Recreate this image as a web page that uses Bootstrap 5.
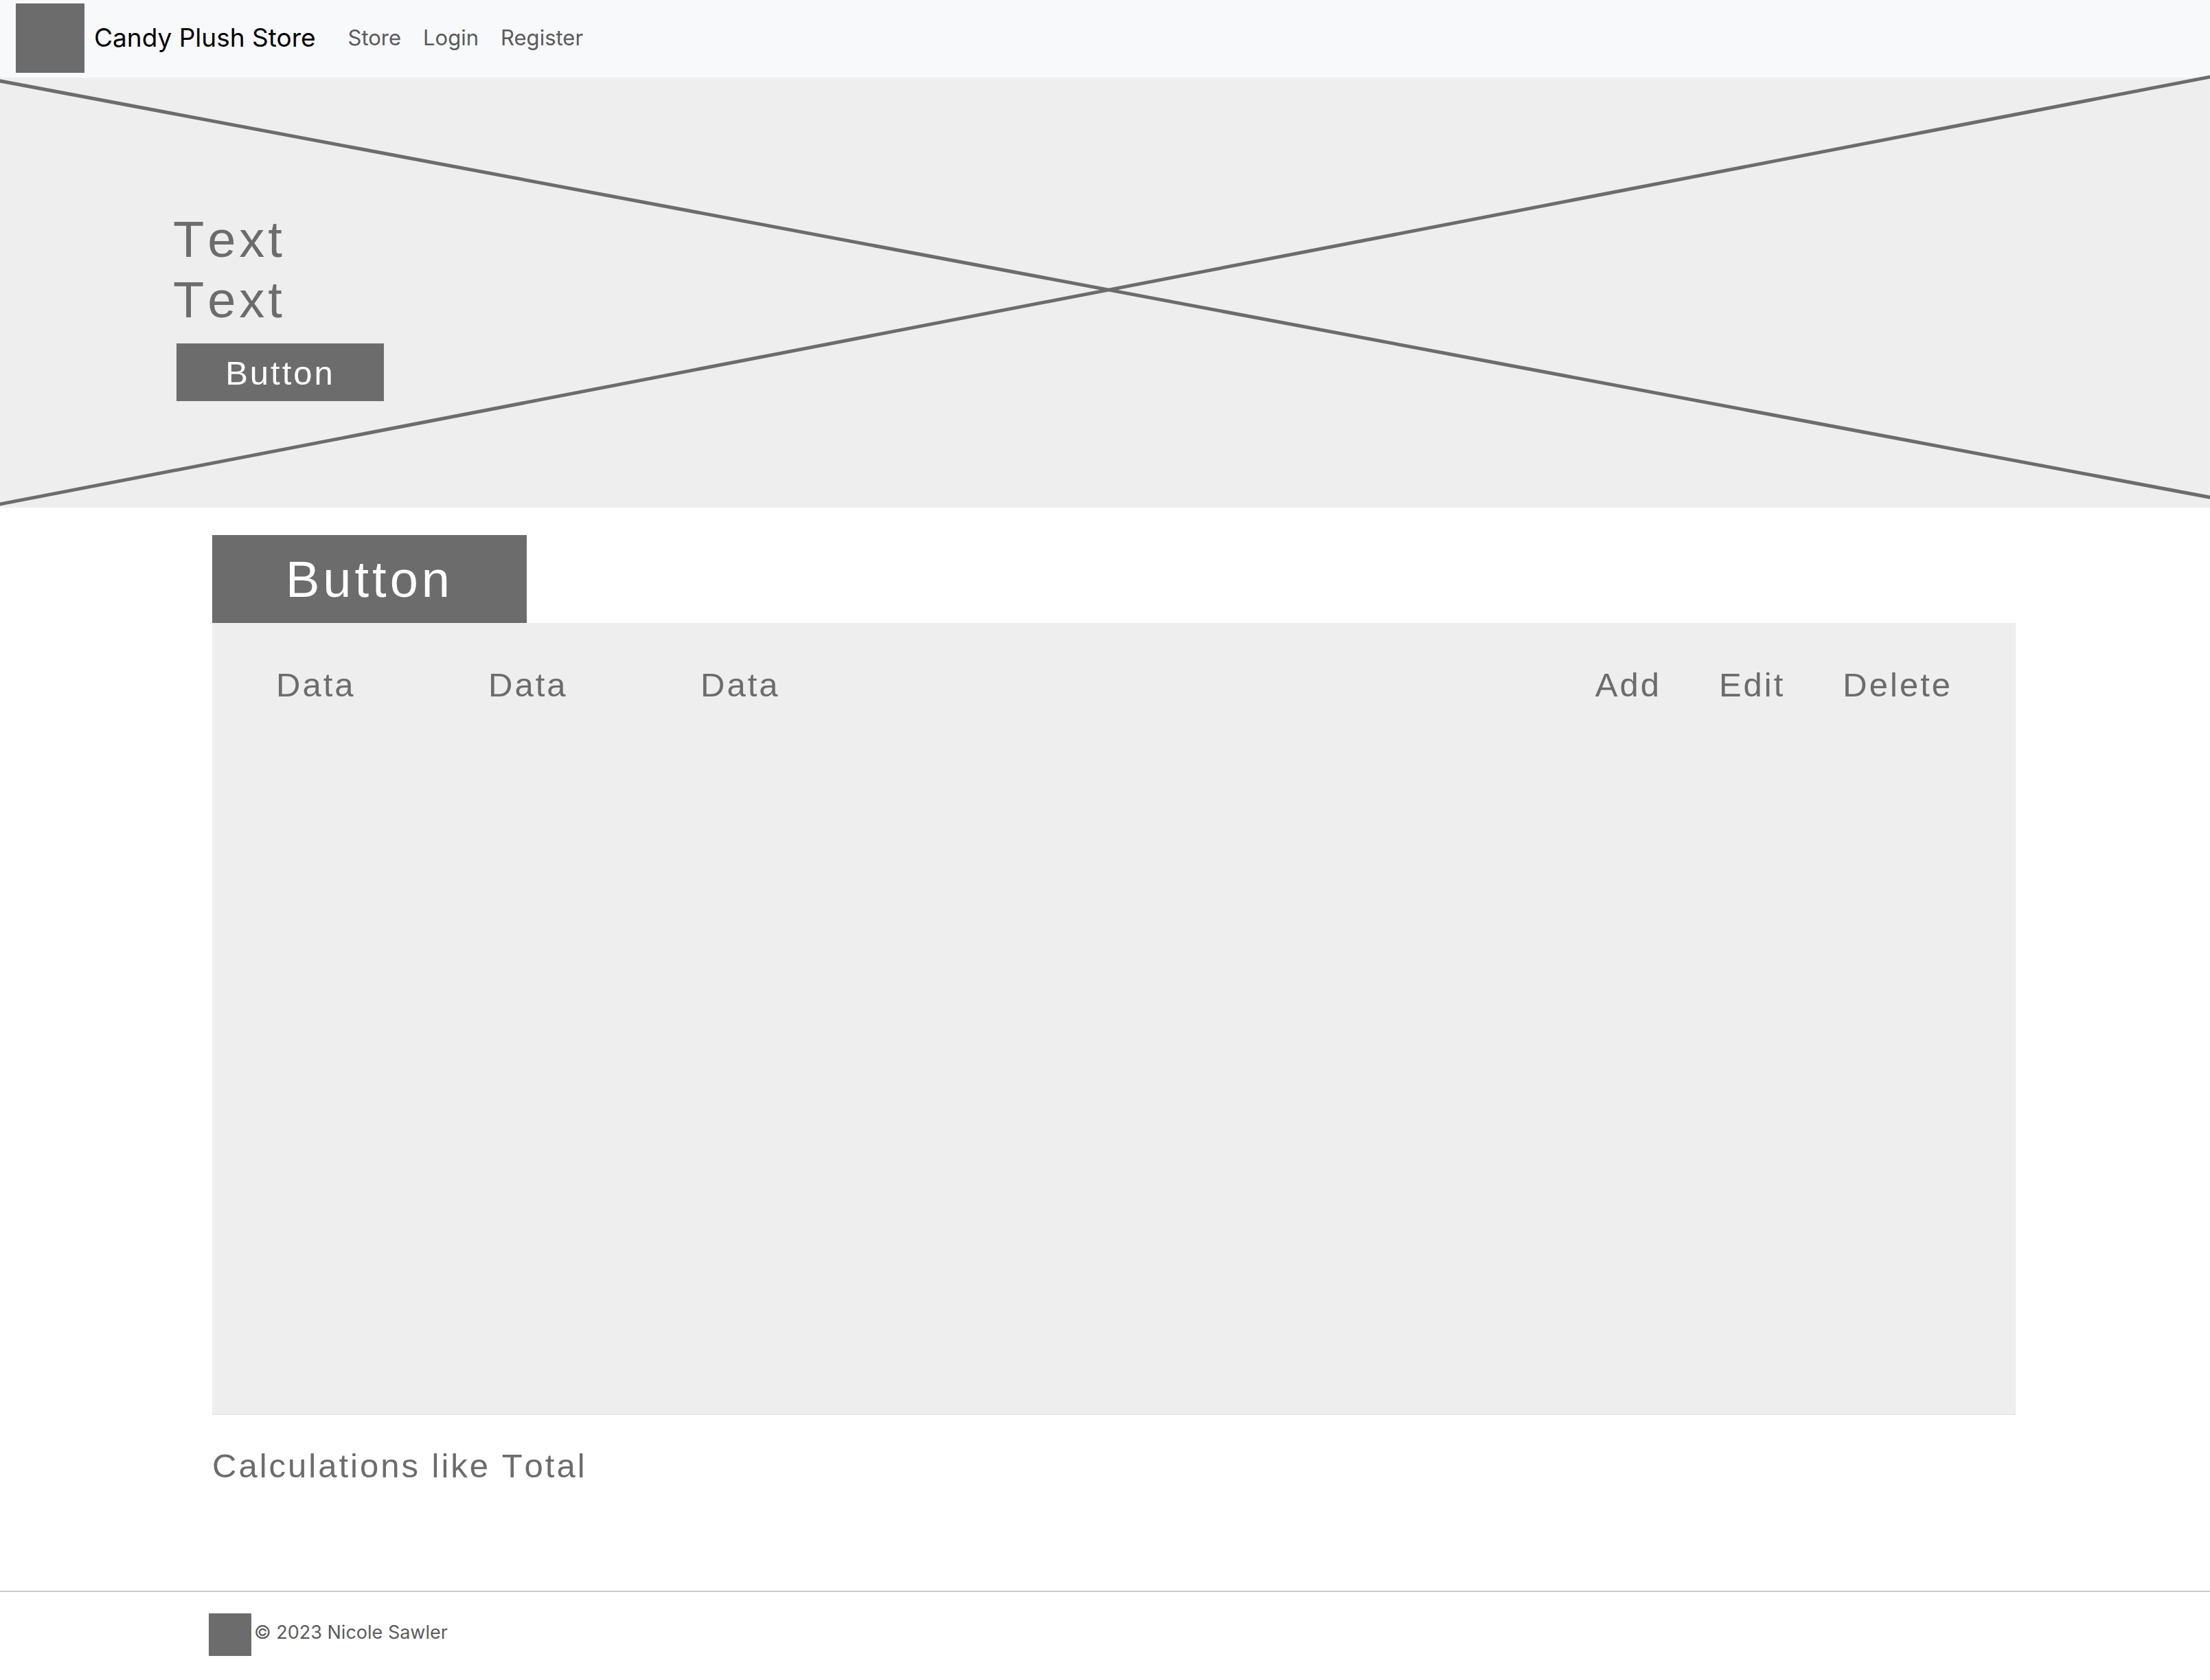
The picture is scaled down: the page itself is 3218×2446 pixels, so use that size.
<!DOCTYPE html>
<html lang="en">
<head>
<meta charset="utf-8">
<meta name="viewport" content="width=device-width, initial-scale=1">
<title>Candy Plush Store</title>
<link href="https://cdn.jsdelivr.net/npm/bootstrap@5.3.0/dist/css/bootstrap.min.css" rel="stylesheet">
<style>
:root { --ink: #6c6c6c; --panel: #eeeeee; }
body { font-family: "Liberation Sans", Arial, sans-serif; color: var(--ink); background: #fff; }
.store-nav { font-family: Inter, sans-serif; background: #f8f9fb; height: 113px; padding: 0 23px 3px; }
.brand-mark { width: 100px; height: 101px; background: var(--ink); }
.store-nav .navbar-brand { font-size: 37px; line-height: 60px; color: #000; gap: 14px; margin-right: 31px; padding: 0; }
.store-nav .navbar-nav .nav-link { font-size: 31px; line-height: 48px; color: #5a5b5c; padding: 0 16px; }
.wire-lg { font-size: 74px; line-height: 88px; letter-spacing: 5px; font-weight: 400; font-kerning: none; }
.wire-md { font-size: 49px; line-height: 56px; letter-spacing: 3px; font-weight: 400; font-kerning: none; }
.hero { background: var(--panel); min-height: 626px; padding: 192px 252px 0; }
.hero-cross { z-index: 0; overflow: visible; pointer-events: none; }
.hero-copy { z-index: 1; }
.wire-btn { background: var(--ink); color: #fff; border: 0; border-radius: 0; padding: 2px 0 0; }
.wire-btn:hover { background: #5c5c5c; color: #fff; }
.hero-btn { width: 302px; height: 84px; margin: 19px 0 0 5px; }
.tab-btn { width: 458px; height: 128px; }
.page-body { padding: 40px 283px 0 309px; }
.data-panel { background: var(--panel); min-height: 1153px; padding: 62px 92px 0 93px; border-bottom: 1px solid #e0e0e0; }
.data-cell { width: 309px; }
.row-actions { gap: 84px; }
.row-action { background: none; border: 0; border-radius: 0; padding: 0; color: var(--ink); }
.total-line { margin: 46px 0 154px; }
.site-footer { font-family: Inter, sans-serif; border-top: 2px solid #c8c8c8; padding: 31px 304px; gap: 4px; }
.footer-mark { width: 62px; height: 62px; background: var(--ink); }
.footer-copy { font-size: 27px; line-height: 56px; color: #5a5b5c; }
</style>
<script src="https://cdn.jsdelivr.net/npm/bootstrap@5.3.0/dist/js/bootstrap.bundle.min.js"></script>
</head>
<body>
<nav class="store-nav navbar navbar-expand d-flex justify-content-start align-items-center">
  <a class="navbar-brand d-flex align-items-center" href="#"><span class="brand-mark"></span>Candy Plush Store</a>
  <ul class="navbar-nav">
    <li class="nav-item"><a class="nav-link" href="#">Store</a></li>
    <li class="nav-item"><a class="nav-link" href="#">Login</a></li>
    <li class="nav-item"><a class="nav-link" href="#">Register</a></li>
  </ul>
</nav>
<main>
  <section class="hero position-relative">
    <svg class="hero-cross position-absolute top-0 start-0 w-100 h-100" viewBox="0 0 3218 626" preserveAspectRatio="none" aria-hidden="true">
      <path d="M-10 3L3228 613M-10 623L3228 -3" stroke="#6c6c6c" stroke-width="5" fill="none"/>
    </svg>
    <div class="hero-copy position-relative">
      <h1 class="wire-lg m-0">Text</h1>
      <p class="wire-lg m-0">Text</p>
      <button type="button" class="btn wire-btn wire-md hero-btn">Button</button>
    </div>
  </section>
  <section class="page-body">
    <button type="button" class="btn wire-btn wire-lg tab-btn d-block">Button</button>
    <div class="data-panel">
      <div class="d-flex justify-content-between">
        <div class="d-flex wire-md">
          <span class="data-cell">Data</span>
          <span class="data-cell">Data</span>
          <span class="data-cell">Data</span>
        </div>
        <div class="d-flex row-actions">
          <button type="button" class="btn row-action wire-md">Add</button>
          <button type="button" class="btn row-action wire-md">Edit</button>
          <button type="button" class="btn row-action wire-md">Delete</button>
        </div>
      </div>
    </div>
    <p class="wire-md total-line">Calculations like Total</p>
  </section>
</main>
<footer class="site-footer d-flex align-items-start">
  <span class="footer-mark"></span>
  <span class="footer-copy">© 2023 Nicole Sawler</span>
</footer>
</body>
</html>
